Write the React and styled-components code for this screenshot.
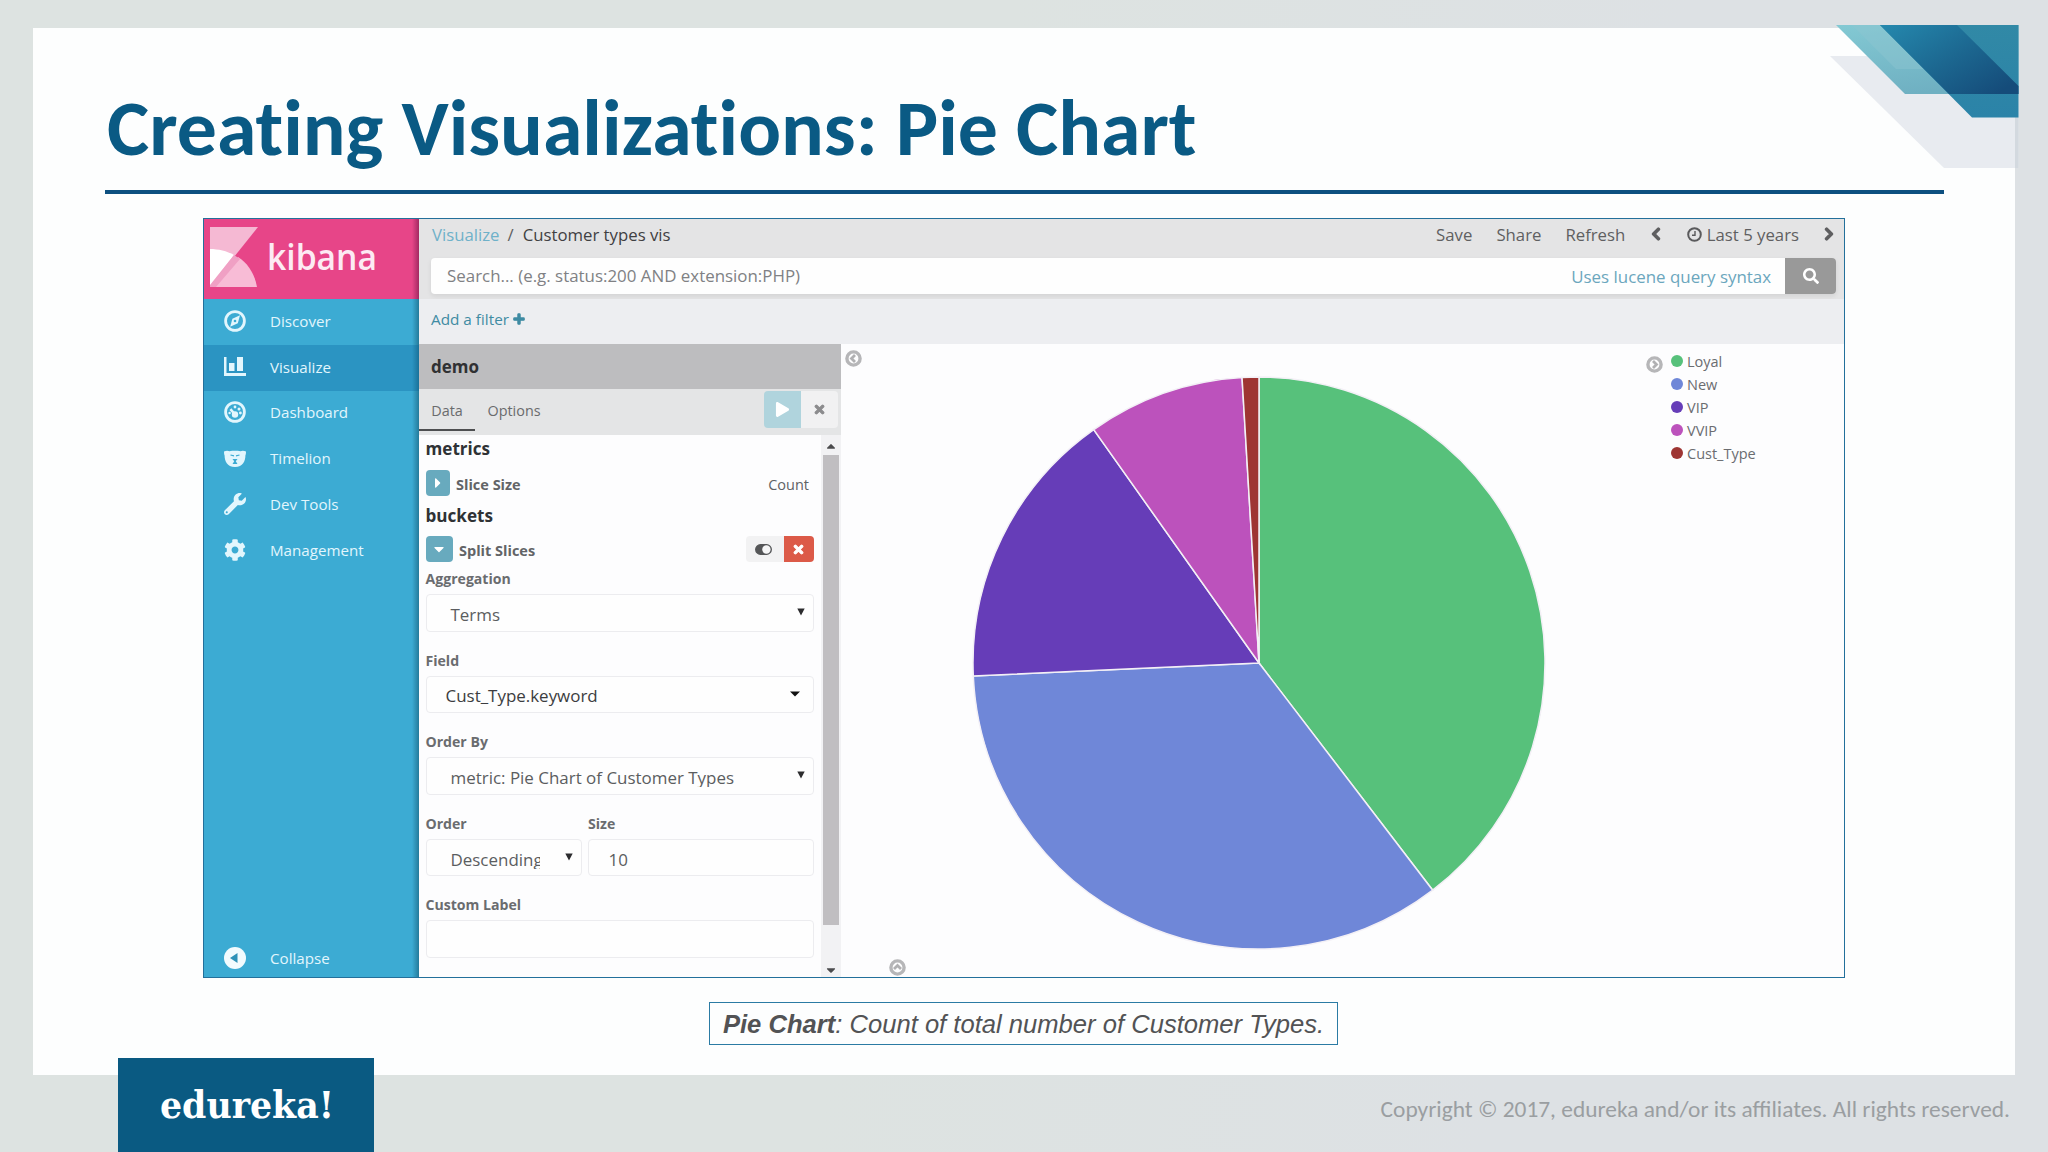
import styled, {createGlobalStyle} from "styled-components";
import {
    FaCaretDown, FaCaretRight, FaCaretUp, FaChevronLeft, FaChevronRight,
    FaCog, FaPlay, FaPlus, FaSearch, FaTimes, FaWrench
} from "react-icons/fa";

const GlobalStyle = createGlobalStyle`
    * {
        box-sizing: border-box;
    }

    body {
        margin: 0;
        overflow: hidden;
        font-family: "Open Sans", "Noto Sans", sans-serif;
    }
`;

const Page = styled.div`
    position: relative;
    width: 2048px;
    height: 1152px;
    padding: 28px 33px 0;
    background: linear-gradient(100deg, #dde3e1 0%, #dde3e1 45%, #dde1e4 75%);
`;

const Slide = styled.main`
    height: 1047px;
    padding: 0 72px 0 72px;
    background: #fdfefe;
`;

const Title = styled.h1`
    height: 162px;
    margin: 0;
    padding: 55px 0 0 2px;
    color: #0a5a84;
    font: 700 79.8px/90px Carlito, Lato, sans-serif;
    font-variant-ligatures: none;
    white-space: nowrap;
`;

const Rule = styled.div`
    width: 1839px;
    height: 4px;
    background: #0d5080;
`;

const Corner = styled.svg`
    position: absolute;
    left: 1824px;
    top: 20px;
`;

const Kibana = styled.section`
    display: flex;
    width: 1642px;
    height: 760px;
    margin: 24px 0 0 98px;
    border: 1px solid #23709b;
    background: #fdfdfe;
`;

const Sidebar = styled.nav`
    display: flex;
    flex-direction: column;
    width: 215px;
    flex-shrink: 0;
    background: linear-gradient(to left, rgba(0, 50, 70, .4), rgba(0, 50, 70, 0) 7px), #3cabd3;
`;

const Brand = styled.div`
    height: 80px;
    background: linear-gradient(to left, rgba(60, 0, 40, .4), rgba(60, 0, 40, 0) 7px), #e74588;
`;

const NavItem = styled.a`
    display: flex;
    align-items: center;
    height: 45.75px;
    padding: 0 0 2px 20px;
    gap: 13px;
    color: #e2f6fd;
    font-size: 15.15px;
    background: ${props => props.$active ? "rgba(0, 90, 150, .28)" : "none"};
    margin-top: ${props => props.$last ? "auto" : 0};
    margin-bottom: ${props => props.$last ? "-5px" : 0};

    svg {
        width: 22px;
        height: 22px;
        margin-right: 11px;
        flex-shrink: 0;
    }
`;

const Main = styled.div`
    display: flex;
    flex-direction: column;
    flex: 1;
    min-width: 0;
`;

const TopBar = styled.header`
    height: 80px;
    padding: 0 8px 0 12px;
    background: #e4e4e5;
`;

const TopRow = styled.div`
    display: flex;
    align-items: center;
    height: 39px;
    padding: 0 0 8px 1px;
    color: #5f5f61;
    font-size: 16.75px;
    white-space: pre;

    > svg {
        stroke: currentColor;
        stroke-width: 50px;
        overflow: visible;
        transform: translateY(-1px);
    }
`;

const Crumb = styled.span`
    color: ${props => props.$link ? "#6fb1c9" : "#3f4042"};
`;

const Slash = styled.span`
    margin: 0 9px 0 8px;
`;

const MenuLink = styled.span`
    margin-left: ${props => props.$first ? "auto" : 0};
    margin-right: 24px;
`;

const TimePicker = styled.span`
    display: flex;
    align-items: center;
    gap: 5px;
    margin: 0 23px 0 23.5px;
`;

const Search = styled.div`
    display: flex;
    align-items: center;
    height: 36px;
    border-radius: 4px;
    background: #fefefe;
    box-shadow: 0 2px 5px rgba(0, 0, 0, .08);
    overflow: hidden;
`;

const Placeholder = styled.span`
    padding-left: 16px;
    margin-bottom: 1px;
    color: #808184;
    font-size: 16.9px;
`;

const SyntaxHint = styled.span`
    margin: 1px 14px 0 auto;
    color: #6ba6bd;
    font-size: 16.9px;
`;

const SearchButton = styled.div`
    display: flex;
    align-items: center;
    justify-content: center;
    width: 51px;
    height: 36px;
    color: #fff;
    background: #999;
`;

const FilterBar = styled.div`
    display: flex;
    align-items: center;
    gap: 4px;
    height: 45px;
    padding: 0 12px 5px;
    color: #3f8ba3;
    font-size: 15.3px;
    background: #edeef1;

    svg {
        stroke: currentColor;
        stroke-width: 50px;
    }
`;

const Workspace = styled.div`
    display: flex;
    flex: 1;
    min-height: 0;
`;

const Editor = styled.aside`
    display: flex;
    flex-direction: column;
    width: 422px;
    flex-shrink: 0;
`;

const EditorTitle = styled.div`
    height: 45px;
    padding-left: 12px;
    color: #303133;
    font-size: 17px;
    font-weight: 700;
    line-height: 45px;
    background: #bdbdbf;
`;

const Tabs = styled.div`
    display: flex;
    height: 46px;
    padding-right: 3px;
    background: #e4e5e6;
`;

const Tab = styled.div`
    height: 42px;
    padding: 0 12.3px;
    color: #6a6b6d;
    font-size: 14.4px;
    line-height: 44px;
    border-bottom: 2px solid ${props => props.$active ? "#4d4e50" : "transparent"};
`;

const TabButton = styled.div`
    display: flex;
    align-items: center;
    justify-content: center;
    width: 37px;
    height: 37px;
    margin-top: 2px;
    margin-left: ${props => props.$run ? "auto" : 0};
    color: ${props => props.$run ? "#fff" : "#8b8b8d"};
    background: ${props => props.$run ? "#b0d4dd" : "#f1f1f2"};
    border-radius: ${props => props.$run ? "4px 0 0 4px" : "0 4px 4px 0"};
`;

const EditorBody = styled.div`
    display: flex;
    flex: 1;
    min-height: 0;
`;

const Form = styled.div`
    width: 402px;
    padding: 0 7px 0 6.5px;
`;

const Heading = styled.div`
    height: ${props => props.$height};
    color: #2f3235;
    font-size: 17.1px;
    font-weight: 700;
    line-height: 28px;
`;

const AggRow = styled.div`
    display: flex;
    align-items: center;
    height: 26px;
    margin-bottom: ${props => props.$gap};
    color: #606265;
    font-size: 14.5px;
`;

const Toggle = styled.div`
    display: flex;
    align-items: center;
    justify-content: center;
    width: ${props => props.$width};
    height: 26px;
    margin-right: 6.5px;
    border-radius: 4px;
    color: #fff;
    background: #68aabe;
`;

const AggName = styled.span`
    margin-top: 2px;
    color: #626467;
    font-weight: 700;
`;

const AggValue = styled.span`
    margin: 2px 5px 0 auto;
`;

const AggButton = styled.div`
    display: flex;
    align-items: center;
    justify-content: center;
    width: ${props => props.$danger ? "30px" : "38px"};
    height: 26px;
    margin-left: ${props => props.$danger ? 0 : "auto"};
    padding-right: ${props => props.$danger ? "1px" : "4px"};
    color: ${props => props.$danger ? "#fff" : "#4a4b4d"};
    background: ${props => props.$danger ? "#dc5a48" : "#f2f2f3"};
    border-radius: ${props => props.$danger ? "0 4px 4px 0" : "4px 0 0 4px"};
`;

const Cross = styled(FaTimes)`
    stroke: currentColor;
    stroke-width: 40px;
`;

const Field = styled.div`
    width: ${props => props.$width || "auto"};
    height: 81.6px;
`;

const FieldPair = styled.div`
    display: flex;
    justify-content: space-between;
`;

const Label = styled.div`
    height: 27px;
    color: #6a6c6f;
    font-size: 14.1px;
    font-weight: 700;
    line-height: 23.5px;
`;

const Control = styled.div`
    display: flex;
    align-items: center;
    justify-content: space-between;
    height: 37.5px;
    padding: 0 ${props => props.$right || "8px"} 0 ${props => props.$left || "24px"};
    border: 1.5px solid #ececef;
    border-radius: 4px;
    color: ${props => props.$dark ? "#3c3d40" : "#5b5d60"};
    font-size: 16.95px;
    background: #fefefe;

    svg {
        margin-bottom: 1px;
    }
`;

const Value = styled.span`
    width: ${props => props.$clip || "auto"};
    height: 20px;
    margin-top: 2px;
    line-height: 21px;
    overflow: ${props => props.$full ? "visible" : "hidden"};
    white-space: nowrap;
`;

const Scrollbar = styled.div`
    display: flex;
    flex-direction: column;
    align-items: center;
    justify-content: space-between;
    width: 20px;
    padding: 4px 0 0;
    background: #f2f2f4;
    color: #4b4b4d;

    svg {
        display: block;
    }
`;

const Thumb = styled.div`
    width: 15.5px;
    height: 470px;
    margin-bottom: 36px;
    background: #c0bec1;
`;

const Visualization = styled.div`
    position: relative;
    flex: 1;
    padding: 28.5px 0 0 128px;
`;

const RoundButton = styled.svg`
    position: absolute;
    left: ${props => props.$x};
    top: ${props => props.$y};
`;

const Legend = styled.div`
    position: absolute;
    left: 830px;
    top: 6px;
    color: #6b6c70;
    font-size: 14.5px;
`;

const LegendItem = styled.div`
    display: flex;
    align-items: center;
    gap: 4px;
    height: 22.9px;
`;

const Dot = styled.span`
    width: 12px;
    height: 12px;
    border-radius: 50%;
    background: ${props => props.$color};
`;

const Caption = styled.p`
    width: 629px;
    height: 43px;
    margin: 24px 0 0 604px;
    border: 1.5px solid #2b7ba4;
    color: #525355;
    font: italic 25.6px/42px "Liberation Sans", sans-serif;
    text-align: center;
    white-space: nowrap;
`;

const Footer = styled.footer`
    display: flex;
    align-items: flex-end;
    justify-content: space-between;
    height: 77px;
    padding: 0 5px 0 85px;
`;

const Edureka = styled.div`
    width: 256px;
    height: 94px;
    background: #0a5a82;
`;

const Copyright = styled.div`
    height: 57px;
    color: #9a9ea1;
    font: 23.4px/28px Carlito, Lato, sans-serif;
    white-space: nowrap;
`;

const slices = [
    {label: "Loyal", color: "#57c17b", from: 0, to: 142.6},
    {label: "New", color: "#6f87d8", from: 142.6, to: 267.4},
    {label: "VIP", color: "#663db8", from: 267.4, to: 324.7},
    {label: "VVIP", color: "#bc52bc", from: 324.7, to: 356.6},
    {label: "Cust_Type", color: "#9e3533", from: 356.6, to: 360},
];

const RADIUS = 286;

const point = (angle) => {
    const rad = angle * Math.PI / 180;
    return `${Math.sin(rad) * RADIUS} ${-Math.cos(rad) * RADIUS}`;
};

const PieChart = () => (
    <svg width="580" height="580" viewBox="-290 -290 580 580">
        {slices.map(s => (
            <path
                key={s.label}
                d={`M0 0 L${point(s.from)} A${RADIUS} ${RADIUS} 0 ${s.to - s.from > 180 ? 1 : 0} 1 ${point(s.to)} Z`}
                fill={s.color}
                stroke="#f3f0f6"
                strokeWidth="1.5"
            />
        ))}
    </svg>
);

const CornerArt = () => (
    <Corner width="200" height="152" viewBox="1824 20 200 152">
        <defs>
            <linearGradient id="light" x1="0" y1="0" x2="0.4" y2="1">
                <stop offset="0" stopColor="#83c9d3"/>
                <stop offset="1" stopColor="#6fb0c2"/>
            </linearGradient>
            <linearGradient id="deep" x1="0" y1="0" x2="1" y2="0.8">
                <stop offset="0" stopColor="#2589ae"/>
                <stop offset="0.55" stopColor="#1c6790"/>
                <stop offset="1" stopColor="#154c7a"/>
            </linearGradient>
            <linearGradient id="side" x1="0" y1="0" x2="0" y2="1">
                <stop offset="0" stopColor="#3189a6"/>
                <stop offset="1" stopColor="#2b83a8"/>
            </linearGradient>
        </defs>
        <path d="M1830 56H2018.5V168H1944Z" fill="#e8ebf0"/>
        <path d="M2015 117H2018.5V168H2015Z" fill="#d3d9df"/>
        <path d="M1836 25H2018.5V94H1905Z" fill="url(#light)"/>
        <path d="M1852 25H1890L1935 69H1896Z" fill="#8fc5d1" opacity=".45"/>
        <path d="M1880 25H2018.5V117.5H1972Z" fill="url(#side)"/>
        <path d="M1880 25H1957L2018.5 86V94H1949Z" fill="url(#deep)"/>
    </Corner>
);

const KibanaLogo = () => (
    <svg width="215" height="80" viewBox="0 0 215 80">
        <path d="M6 8H54L6 68Z" fill="#f5b9d3"/>
        <path d="M6 30C14 30 23 32 30 36L6 67Z" fill="#fff"/>
        <path d="M34 38C44 44 51 56 53 68H10Z" fill="#f8bcd6"/>
        <path d="M30 36L36 40L12 68H6V66Z" fill="#f0a0c4"/>
        <text x="63" y="51" fill="#fdeaf3" fontFamily="Open Sans, sans-serif" fontSize="36" fontWeight="600" textLength="110" lengthAdjust="spacingAndGlyphs">kibana</text>
    </svg>
);

const CompassIcon = () => (
    <svg viewBox="0 0 22 22" fill="none" stroke="currentColor">
        <circle cx="11" cy="11" r="9.4" strokeWidth="2.8"/>
        <path d="M16 5.2L13.8 13.2L6.2 16.8L8.4 8.8Z" fill="currentColor" stroke="none"/>
        <circle cx="11" cy="11" r="1.3" fill="#3cabd3" stroke="none"/>
    </svg>
);

const BarsIcon = () => (
    <svg viewBox="0 0 22 22" fill="currentColor">
        <path d="M0 1H2.5V17H22V20H0Z"/>
        <path d="M5 7H10.5V15H5Z"/>
        <path d="M13 1H19V15H13Z"/>
    </svg>
);

const GaugeIcon = () => (
    <svg viewBox="0 0 22 22" fill="none" stroke="currentColor">
        <circle cx="11" cy="11" r="9.4" strokeWidth="2.8"/>
        <circle cx="11" cy="13.5" r="3.2" fill="currentColor" stroke="none"/>
        <path d="M11 13.5L6.4 8.2" strokeWidth="2.6"/>
        <g fill="currentColor" stroke="none">
            <circle cx="11" cy="6" r="1.4"/>
            <circle cx="15" cy="8" r="1.5"/>
            <circle cx="5.6" cy="12" r="1.2"/>
            <circle cx="16.4" cy="12" r="1.4"/>
        </g>
    </svg>
);

const BearIcon = () => (
    <svg viewBox="0 0 22 22" fill="currentColor">
        <path d="M0 4.5C2 3.4 4 3.4 5.5 4.2C9 3.6 13 3.6 16.5 4.2C18 3.4 20 3.4 22 4.5C22 6.5 21.8 7.5 21.4 8.5C21.4 14 19 20 11 20C3 20 .6 14 .6 8.5C.2 7.5 0 6.5 0 4.5Z"/>
        <path d="M6.5 8L10 8.8M15.5 8L12 8.8" stroke="#3cabd3" strokeWidth="1.2"/>
        <path d="M8.5 12H13.5L11.8 14.2L13.5 17H8.5L10.2 14.2Z" fill="#3cabd3"/>
    </svg>
);

const CollapseIcon = () => (
    <svg viewBox="0 0 22 22">
        <circle cx="11" cy="11" r="11" fill="#f2fbfe"/>
        <path d="M13.5 6V16L6 11Z" fill="#2f92b8"/>
    </svg>
);

const ClockIcon = () => (
    <svg width="15" height="15" viewBox="0 0 15 15" fill="none" stroke="#5a5a5c">
        <circle cx="7.5" cy="7.5" r="6.3" strokeWidth="2"/>
        <path d="M8 4V8.2H5" strokeWidth="1.4"/>
    </svg>
);

const ToggleIcon = () => (
    <svg width="17" height="11" viewBox="0 0 17 11">
        <rect x=".7" y=".7" width="15.6" height="9.6" rx="4.8" fill="#555658" stroke="#555658" strokeWidth="1.3"/>
        <circle cx="11.4" cy="5.5" r="4.2" fill="#f6f6f7"/>
    </svg>
);

const SelectArrow = () => (
    <svg width="8" height="8" viewBox="0 0 8 8">
        <path d="M0.3 0.5H7.7L4 7.5Z" fill="#2c2c2e"/>
    </svg>
);

const MenuArrow = () => (
    <svg width="10" height="6" viewBox="0 0 10 6">
        <path d="M0 .5H10L5 5.5Z" fill="#111"/>
    </svg>
);

const CircleArrow = ({x, y, d}) => (
    <RoundButton $x={x} $y={y} width="17" height="17" viewBox="0 0 17 17" fill="none">
        <circle cx="8.5" cy="8.5" r="6.6" stroke="#b6b6b8" strokeWidth="3.4"/>
        <path d={d} stroke="#b0b0b2" strokeWidth="2.8"/>
    </RoundButton>
);

const navItems = [
    {label: "Discover", Icon: CompassIcon},
    {label: "Visualize", Icon: BarsIcon, active: true},
    {label: "Dashboard", Icon: GaugeIcon},
    {label: "Timelion", Icon: BearIcon},
    {label: "Dev Tools", Icon: FaWrench},
    {label: "Management", Icon: FaCog},
];

const Select = ({children, clip, full}) => (
    <Control>
        <Value $clip={clip} $full={full}>{children}</Value>
        <SelectArrow/>
    </Control>
);

const EditorForm = () => (
    <Form>
        <Heading $height="35px">metrics</Heading>
        <AggRow $gap="6px">
            <Toggle $width="24px"><FaCaretRight size={16}/></Toggle>
            <AggName>Slice Size</AggName>
            <AggValue>Count</AggValue>
        </AggRow>
        <Heading $height="34px">buckets</Heading>
        <AggRow $gap="5px">
            <Toggle $width="27px"><FaCaretDown size={16}/></Toggle>
            <AggName>Split Slices</AggName>
            <AggButton><ToggleIcon/></AggButton>
            <AggButton $danger><Cross size={13}/></AggButton>
        </AggRow>
        <Field>
            <Label>Aggregation</Label>
            <Select full>Terms</Select>
        </Field>
        <Field>
            <Label>Field</Label>
            <Control $dark $left="19px" $right="13px">
                <Value $full>Cust_Type.keyword</Value>
                <MenuArrow/>
            </Control>
        </Field>
        <Field>
            <Label>Order By</Label>
            <Select>metric: Pie Chart of Customer Types</Select>
        </Field>
        <FieldPair>
            <Field $width="156px">
                <Label>Order</Label>
                <Select clip="89px">Descending</Select>
            </Field>
            <Field $width="226px">
                <Label>Size</Label>
                <Control $left="19.5px"><Value $full>10</Value></Control>
            </Field>
        </FieldPair>
        <Field>
            <Label>Custom Label</Label>
            <Control/>
        </Field>
    </Form>
);

export default function App() {
    return <>
        <GlobalStyle/>
        <Page>
            <Slide>
                <Title>Creating Visualizations: Pie Chart</Title>
                <Rule/>
                <Kibana>
                    <Sidebar>
                        <Brand><KibanaLogo/></Brand>
                        {navItems.map(({label, Icon, active}) => (
                            <NavItem key={label} $active={active}><Icon/>{label}</NavItem>
                        ))}
                        <NavItem $last><CollapseIcon/>Collapse</NavItem>
                    </Sidebar>
                    <Main>
                        <TopBar>
                            <TopRow>
                                <Crumb $link>Visualize</Crumb>
                                <Slash>/</Slash>
                                <Crumb>Customer types vis</Crumb>
                                <MenuLink $first>Save</MenuLink>
                                <MenuLink>Share</MenuLink>
                                <MenuLink>Refresh</MenuLink>
                                <FaChevronLeft size={14}/>
                                <TimePicker><ClockIcon/>Last 5 years</TimePicker>
                                <FaChevronRight size={14}/>
                            </TopRow>
                            <Search>
                                <Placeholder>Search... (e.g. status:200 AND extension:PHP)</Placeholder>
                                <SyntaxHint>Uses lucene query syntax</SyntaxHint>
                                <SearchButton><FaSearch size={16}/></SearchButton>
                            </Search>
                        </TopBar>
                        <FilterBar>Add a filter<FaPlus size={12}/></FilterBar>
                        <Workspace>
                            <Editor>
                                <EditorTitle>demo</EditorTitle>
                                <Tabs>
                                    <Tab $active>Data</Tab>
                                    <Tab>Options</Tab>
                                    <TabButton $run><FaPlay size={15}/></TabButton>
                                    <TabButton><Cross size={13}/></TabButton>
                                </Tabs>
                                <EditorBody>
                                    <EditorForm/>
                                    <Scrollbar>
                                        <FaCaretUp size={14}/>
                                        <Thumb/>
                                        <FaCaretDown size={14}/>
                                    </Scrollbar>
                                </EditorBody>
                            </Editor>
                            <Visualization>
                                <PieChart/>
                                <CircleArrow x="4px" y="6px" d="M10 5L6.5 8.5L10 12"/>
                                <CircleArrow x="48px" y="615px" d="M5 10L8.5 6.5L12 10"/>
                                <CircleArrow x="805px" y="12px" d="M7 5L10.5 8.5L7 12"/>
                                <Legend>
                                    {slices.map(s => (
                                        <LegendItem key={s.label}><Dot $color={s.color}/>{s.label}</LegendItem>
                                    ))}
                                </Legend>
                            </Visualization>
                        </Workspace>
                    </Main>
                </Kibana>
                <Caption><b>Pie Chart</b>: Count of total number of Customer Types.</Caption>
            </Slide>
            <Footer>
                <Edureka>
                    <svg width="256" height="94" viewBox="0 0 256 94">
                        <text x="42" y="60" fill="#fff" fontFamily="DejaVu Serif, serif" fontSize="38" fontWeight="700" textLength="174" lengthAdjust="spacingAndGlyphs">edureka!</text>
                    </svg>
                </Edureka>
                <Copyright>Copyright © 2017, edureka and/or its affiliates. All rights reserved.</Copyright>
            </Footer>
            <CornerArt/>
        </Page>
    </>;
}
